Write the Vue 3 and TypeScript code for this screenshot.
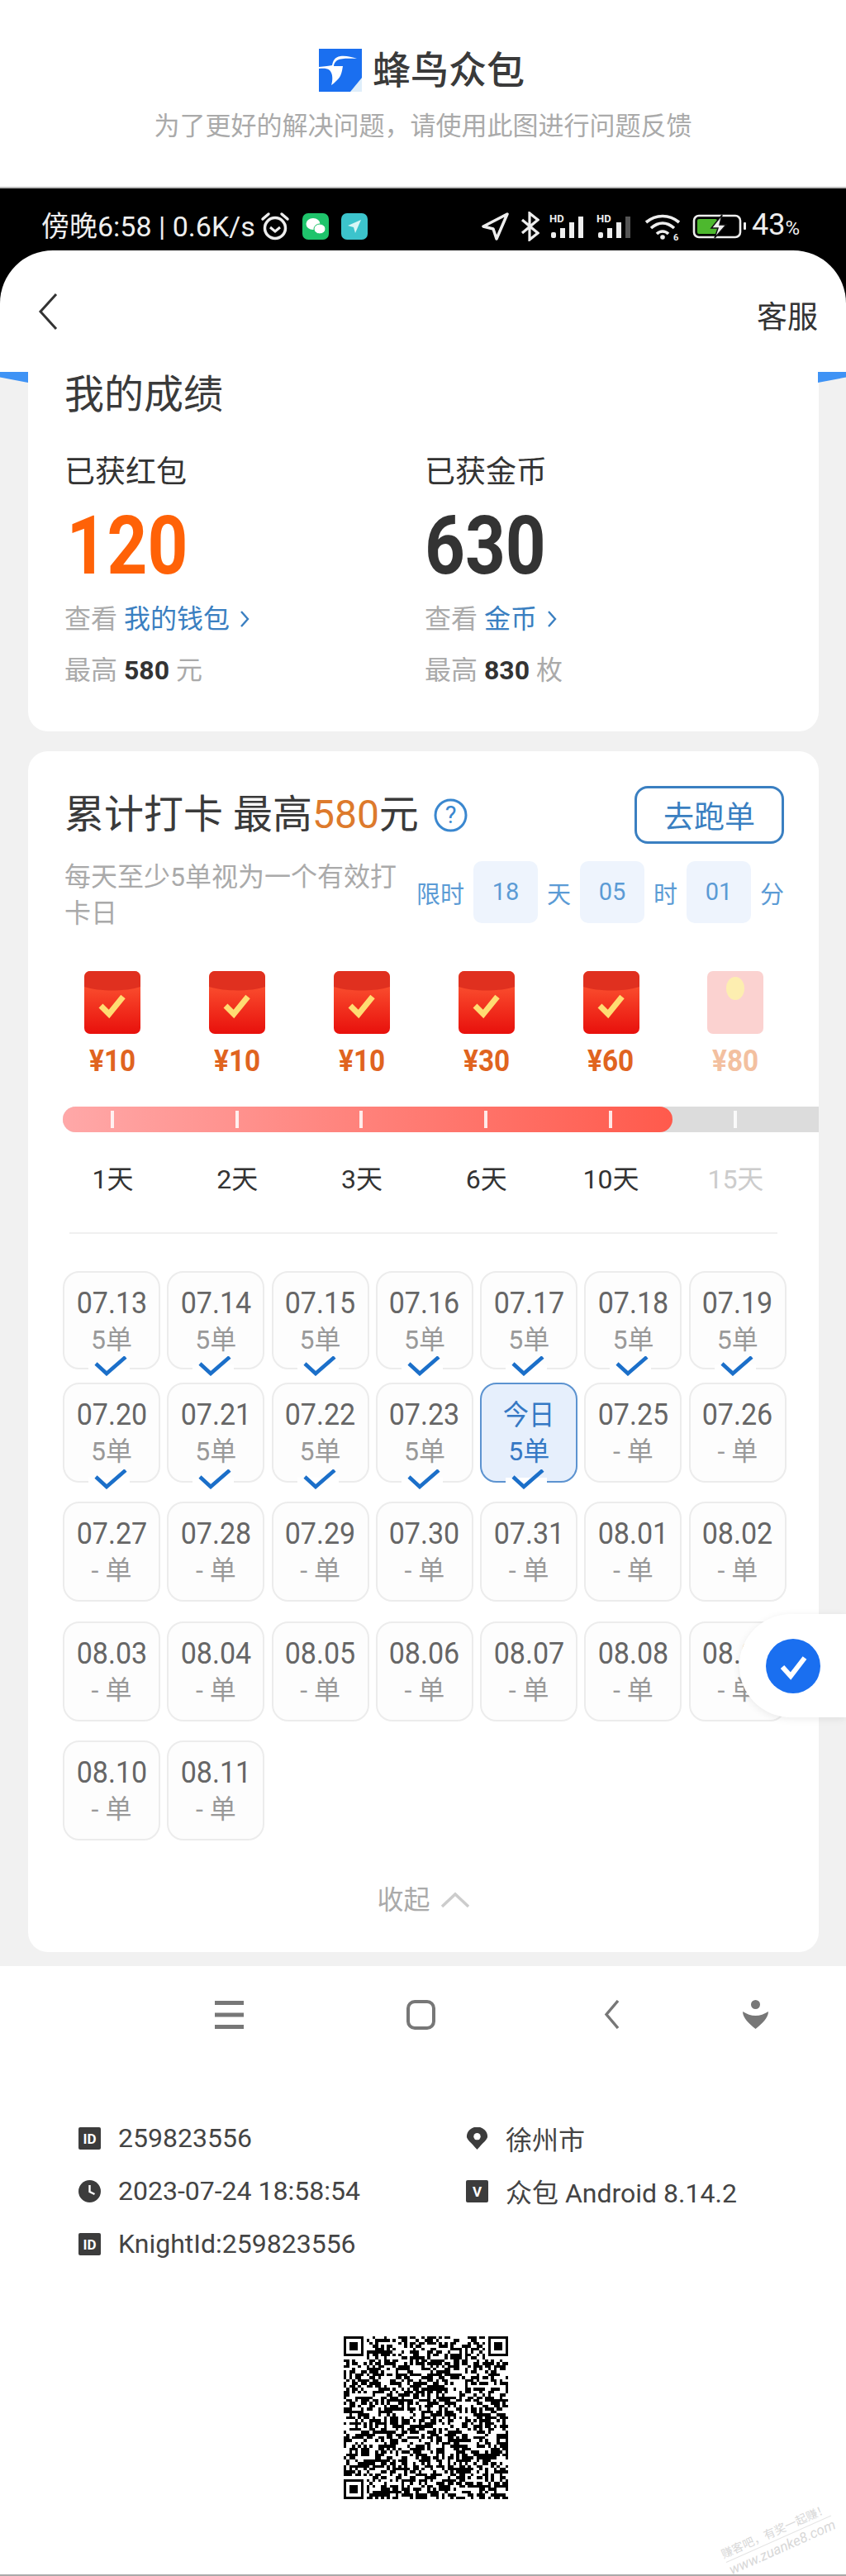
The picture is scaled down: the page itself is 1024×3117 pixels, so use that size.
<!-- App.vue -->
<template>
  <main class="page">
    <header class="top">
      <div class="brand">
        <svg class="logo" viewBox="0 0 52 52" aria-hidden="true">
          <rect width="52" height="52" fill="#1a6ff0" />
          <path d="M38 52 52 35V52Z" fill="#dfeefa" />
          <path
            d="M46 12C38 12 28 11 22 14 19 16 18 19 18 21L29 21C28 27 27 34 22 38 19 41 17 43 15 44 17 38 17 30 13 26 9 23 4 24 0 24L0 22C7 21 13 21 16 20 17 15 19 10 26 9 32 8 40 10 46 12Z"
            fill="#fff"
          />
        </svg>
        <h1>蜂鸟众包</h1>
      </div>
      <p class="hint">为了更好的解决问题，请使用此图进行问题反馈</p>
    </header>

    <section class="phone">
      <div class="status">
        <span class="status-text">傍晚6:58 | 0.6K/s</span>
        <svg class="alarm" viewBox="0 0 36 36" aria-hidden="true">
          <circle cx="18" cy="20" r="12.5" fill="none" stroke="#eee" stroke-width="3.5" />
          <path d="M12 19l6 5 6-5" fill="none" stroke="#eee" stroke-width="3" />
          <path d="M3 9 10 3M33 9 26 3" stroke="#eee" stroke-width="3.5" stroke-linecap="round" />
        </svg>
        <svg class="app-icon wechat" viewBox="0 0 32 32" aria-hidden="true">
          <rect width="32" height="32" rx="7" fill="#1fc46b" />
          <ellipse cx="13" cy="13" rx="8.5" ry="7" fill="#fff" />
          <ellipse cx="21" cy="19" rx="7" ry="6" fill="#fff" stroke="#1fc46b" />
        </svg>
        <svg class="app-icon teal" viewBox="0 0 32 32" aria-hidden="true">
          <rect width="32" height="32" rx="7" fill="#3cc4cc" />
          <path d="M24 8 8 15l7 2 2 7Z" fill="#d8f6f6" />
        </svg>

        <svg class="st-arrow" viewBox="0 0 33 34" aria-hidden="true">
          <path d="M31 2 2 17l12 3 4 12Z" fill="none" stroke="#eee" stroke-width="3.5" stroke-linejoin="round" />
        </svg>
        <svg class="st-bt" viewBox="0 0 23 36" aria-hidden="true">
          <path d="M2 10 21 26 11 34V2L21 10 2 26" fill="none" stroke="#eee" stroke-width="3.2" />
        </svg>
        <svg v-for="(dim, i) in [false, true]" :key="i" class="st-signal" viewBox="0 0 46 30" aria-hidden="true">
          <text x="1" y="10" class="hd">HD</text>
          <rect x="3" y="22" width="6" height="7" rx="2" fill="#eee" />
          <rect x="14" y="17" width="6" height="12" fill="#eee" />
          <rect x="25" y="10" width="6" height="19" fill="#eee" />
          <rect x="36" y="3" width="6" height="26" :fill="dim ? '#555' : '#eee'" />
        </svg>
        <svg class="st-wifi" viewBox="0 0 44 34" aria-hidden="true">
          <path d="M2 12C14 2 30 2 42 12M8 19C17 11 27 11 36 19M15 26C19 22 25 22 29 26" fill="none" stroke="#eee" stroke-width="3.6" />
          <circle cx="22" cy="30" r="2.8" fill="#eee" />
          <text x="35" y="34" class="wifi-six">6</text>
        </svg>
        <svg class="st-battery" viewBox="0 0 66 30" aria-hidden="true">
          <rect x="2" y="2" width="56" height="26" rx="6" fill="none" stroke="#eee" stroke-width="2.6" />
          <rect x="6" y="6" width="24" height="18" rx="2" fill="#4db82e" />
          <path d="M36 1 23 17h8l-4 12 14-16h-8Z" fill="#eee" stroke="#111" stroke-width="1.5" />
          <rect x="62" y="10" width="3" height="9" rx="1" fill="#eee" />
        </svg>
        <span class="battery-text">43<small>%</small></span>
      </div>

      <div class="screen-nav">
        <svg class="back" viewBox="0 0 24 46" aria-hidden="true">
          <path d="M22 2 3 23l19 21" fill="none" stroke="#333" stroke-width="3" />
        </svg>
        <span class="service">客服</span>
      </div>

      <div class="content">
        <section class="card score">
          <h2>我的成绩</h2>
          <div class="stats">
            <div v-for="s in stats" :key="s.label">
              <p class="stat-label">{{ s.label }}</p>
              <p class="stat-num" :class="{ hot: s.hot }">{{ s.value }}</p>
              <p class="stat-link">查看 <a>{{ s.link }}</a><svg class="link-arrow" viewBox="0 0 12 24" aria-hidden="true"><path d="M2 3l8 9-8 9" fill="none" stroke="#3a7fc1" stroke-width="2.4" /></svg></p>
              <p class="stat-max">最高 <b>{{ s.max }}</b> {{ s.unit }}</p>
            </div>
          </div>
        </section>

        <section class="card checkin">
          <div class="head">
            <h2>
              累计打卡 最高<em>580</em>元
              <svg class="help" viewBox="0 0 41 41" aria-hidden="true">
                <circle cx="20.5" cy="20.5" r="18.5" fill="none" stroke="#3a87cf" stroke-width="3" />
                <text x="20.5" y="30" text-anchor="middle" class="help-q">?</text>
              </svg>
            </h2>
            <button class="go">去跑单</button>
          </div>

          <div class="rule">
            <p>每天至少5单视为一个有效打卡日</p>
            <div class="timer">
              <span>限时</span><b>18</b><span>天</span><b>05</b><span>时</span><b>01</b><span>分</span>
            </div>
          </div>

          <div class="rewards">
            <div v-for="r in rewards" :key="r.day" class="reward" :class="{ off: !r.got }">
              <svg class="packet" viewBox="0 0 68 76" aria-hidden="true">
                <template v-if="r.got">
                  <defs>
                    <linearGradient id="pk" x1="0" y1="0" x2="0" y2="1">
                      <stop offset="0%" stop-color="#ff5f38" />
                      <stop offset="100%" stop-color="#e8100c" />
                    </linearGradient>
                  </defs>
                  <rect width="68" height="76" rx="7" fill="url(#pk)" />
                  <path d="M0 7a7 7 0 0 1 7-7h54a7 7 0 0 1 7 7v12c-18 6-50 6-68 0Z" fill="#e0301f" />
                  <path d="M20 42l10 10 17-21" fill="none" stroke="#ffdc72" stroke-width="7" />
                </template>
                <template v-else>
                  <rect width="68" height="76" rx="7" fill="#fbd2d0" />
                  <ellipse cx="34" cy="21" rx="11" ry="14" fill="#fdeeb0" />
                </template>
              </svg>
              <span class="money">¥{{ r.money }}</span>
            </div>
          </div>

          <div class="bar">
            <div class="bar-fill"></div>
            <i v-for="left in ticks" :key="left" class="tick" :style="{ left: left + 'px' }"></i>
          </div>

          <div class="rewards days">
            <span v-for="r in rewards" :key="r.day" :class="{ off: !r.got }">{{ r.day }}天</span>
          </div>

          <div class="divider"></div>

          <div class="calendar">
            <div v-for="d in days" :key="d.date" class="cell" :class="{ done: d.done, today: d.today }">
              <span class="date">{{ d.today ? '今日' : d.date }}</span>
              <span class="orders">{{ d.done ? '5单' : '- 单' }}</span>
              <svg v-if="d.done" class="tick-mark" viewBox="0 0 50 24" aria-hidden="true">
                <rect y="10" width="50" height="6" fill="#fff" />
                <path d="M9 9l13 12L45 1" fill="none" stroke="#1b6fc9" stroke-width="4.6" />
              </svg>
            </div>
          </div>

          <div class="fold">
            收起
            <svg viewBox="0 0 36 20" aria-hidden="true">
              <path d="M2 18 18 3l16 15" fill="none" stroke="#ccc" stroke-width="3.5" />
            </svg>
          </div>
        </section>
      </div>
    </section>

    <nav class="dock">
      <svg class="d-menu" viewBox="0 0 35 35" aria-hidden="true">
        <path d="M0 3h35M0 17.500h35M0 32h35" stroke="#777" stroke-width="5" />
      </svg>
      <svg class="d-home" viewBox="0 0 35 36" aria-hidden="true">
        <rect x="2" y="2" width="31" height="32" rx="8" fill="none" stroke="#777" stroke-width="4" />
      </svg>
      <svg class="d-back" viewBox="0 0 19 35" aria-hidden="true">
        <path d="M17 1 3 17.500 17 34" fill="none" stroke="#777" stroke-width="3.4" />
      </svg>
      <svg class="d-person" viewBox="0 0 31 35" aria-hidden="true">
        <circle cx="15.500" cy="5.500" r="5.500" fill="#777" />
        <path d="M0 14c5 3 10 5 15.500 5S26 17 31 14c0 8-8 15-15.500 21C8 29 0 22 0 14Z" fill="#777" />
      </svg>
    </nav>

    <section class="info">
      <div class="info-row">
        <svg viewBox="0 0 27 27" aria-hidden="true">
          <rect width="27" height="27" rx="2" fill="#3c3c3c" />
          <text x="13.500" y="19.500" text-anchor="middle" class="ico-text">ID</text>
        </svg>
        <span>259823556</span>
      </div>
      <div class="info-row">
        <svg viewBox="0 0 27 29" aria-hidden="true">
          <path d="M13.500 29C6 20 0 16 0 12a13.500 12.500 0 0 1 27 0c0 4-6 8-13.500 17Z" fill="#3c3c3c" />
          <circle cx="13.500" cy="12" r="4.500" fill="#fff" />
        </svg>
        <span>徐州市</span>
      </div>
      <div class="info-row">
        <svg viewBox="0 0 27 27" aria-hidden="true">
          <circle cx="13.500" cy="13.500" r="13.500" fill="#3c3c3c" />
          <path d="M13.500 6v8l6 3" fill="none" stroke="#fff" stroke-width="2.400" />
        </svg>
        <span>2023-07-24 18:58:54</span>
      </div>
      <div class="info-row">
        <svg viewBox="0 0 27 27" aria-hidden="true">
          <rect width="27" height="27" rx="2" fill="#3c3c3c" />
          <text x="13.500" y="19.500" text-anchor="middle" class="ico-text">V</text>
        </svg>
        <span>众包 Android 8.14.2</span>
      </div>
      <div class="info-row">
        <svg viewBox="0 0 27 27" aria-hidden="true">
          <rect width="27" height="27" rx="2" fill="#3c3c3c" />
          <text x="13.500" y="19.500" text-anchor="middle" class="ico-text">ID</text>
        </svg>
        <span>KnightId:259823556</span>
      </div>
    </section>

    <svg class="qr" :viewBox="`0 0 ${qrSize} ${qrSize}`" preserveAspectRatio="none" shape-rendering="crispEdges" aria-hidden="true">
      <path :d="qrPath" fill="#000" />
    </svg>

    <!-- overlays -->
    <div class="float-pill">
      <svg viewBox="0 0 66 66" aria-hidden="true">
        <circle cx="33" cy="33" r="33" fill="#1a6ff0" />
        <path d="M20 34l10 11 17-22" fill="none" stroke="#fff" stroke-width="6" />
      </svg>
    </div>
    <div class="watermark">
      <span>赚客吧，有奖一起赚！</span>
      <span class="wm-url">www.zuanke8.com</span>
    </div>
  </main>
</template>

<script setup lang="ts">
import { computed } from 'vue'

interface Day {
  date: string
  done: boolean
  today: boolean
}

const stats = [
  { label: '已获红包', value: '120', hot: true, link: '我的钱包', max: '580', unit: '元' },
  { label: '已获金币', value: '630', hot: false, link: '金币', max: '830', unit: '枚' }
]

const rewards = [
  { day: 1, money: 10, got: true },
  { day: 2, money: 10, got: true },
  { day: 3, money: 10, got: true },
  { day: 6, money: 30, got: true },
  { day: 10, money: 60, got: true },
  { day: 15, money: 80, got: false }
]

const ticks = [58, 209, 359, 510, 661, 812]

const pad = (n: number): string => String(n).padStart(2, '0')

const days = computed<Day[]>(() => {
  const list: Day[] = []
  for (let d = 13; d <= 31; d++) {
    list.push({ date: `07.${pad(d)}`, done: d <= 24, today: d === 24 })
  }
  for (let d = 1; d <= 11; d++) {
    list.push({ date: `08.${pad(d)}`, done: false, today: false })
  }
  return list
})

// qr code look-alike, modules from a small seeded generator
const qrSize = 57

const qrPath = computed<string>(() => {
  let seed = 259823556
  const next = (): number => {
    seed = (seed * 1103515245 + 12345) % 2147483648
    return seed / 2147483648
  }
  const finder = (x: number, y: number, ox: number, oy: number): boolean => {
    const dx = x - ox
    const dy = y - oy
    if (dx < 0 || dy < 0 || dx > 6 || dy > 6) return false
    const ring = dx === 0 || dy === 0 || dx === 6 || dy === 6
    const core = dx >= 2 && dx <= 4 && dy >= 2 && dy <= 4
    return ring || core
  }
  const near = (x: number, y: number): boolean =>
    (x < 8 && y < 8) || (x >= qrSize - 8 && y < 8) || (x < 8 && y >= qrSize - 8)

  let d = ''
  for (let y = 0; y < qrSize; y++) {
    for (let x = 0; x < qrSize; x++) {
      const r = next()
      const on = near(x, y)
        ? finder(x, y, 0, 0) || finder(x, y, qrSize - 7, 0) || finder(x, y, 0, qrSize - 7)
        : r > 0.48
      if (on) d += `M${x} ${y}h1v1h-1z`
    }
  }
  return d
})
</script>

<style>
html,
body {
  margin: 0;
  background: #fff;
}
</style>

<style scoped>
* {
  box-sizing: border-box;
}

.page {
  position: relative;
  width: 1024px;
  height: 3117px;
  overflow: hidden;
  background: #fff;
  border-bottom: 2px solid #aaa;
  font-family: Roboto, "Noto Sans CJK SC", sans-serif;
  color: #333;
}

h1,
h2,
p {
  margin: 0;
  font-weight: 400;
}

/* top banner */
.top {
  height: 226px;
  padding-top: 59px;
  text-align: center;
}
.brand {
  display: flex;
  align-items: center;
  gap: 13px;
  padding-left: 386px;
}
.logo {
  width: 52px;
  height: 52px;
}
.brand h1 {
  font-size: 46px;
  line-height: 52px;
  font-weight: 500;
  color: #3a3a3a;
}
.hint {
  margin-top: 22px;
  font-size: 31px;
  line-height: 40px;
  color: #aaa;
}

/* status bar */
.phone {
  background: #000;
  border-top: 2px solid #bbb;
}
.status {
  display: flex;
  align-items: center;
  height: 75px;
  padding: 17px 56px 0 50px;
  color: #eee;
}
.status-text {
  font-size: 34px;
  line-height: 40px;
  white-space: nowrap;
}
.alarm {
  width: 36px;
  height: 36px;
  margin-left: 6px;
}
.app-icon {
  width: 32px;
  height: 32px;
}
.wechat {
  margin-left: 15px;
}
.teal {
  margin-left: 15px;
}
.st-arrow {
  width: 33px;
  height: 34px;
  margin-left: auto;
}
.st-bt {
  width: 23px;
  height: 36px;
  margin-left: 14px;
}
.st-signal {
  width: 46px;
  height: 30px;
  margin-left: 11px;
}
.hd {
  font: 700 13px Roboto, sans-serif;
  fill: #eee;
}
.st-wifi {
  width: 44px;
  height: 34px;
  margin-left: 13px;
}
.wifi-six {
  font: 700 11px Roboto, sans-serif;
  fill: #eee;
}
.st-battery {
  width: 66px;
  height: 30px;
  margin-left: 14px;
}
.battery-text {
  margin-left: 6px;
  font-size: 36px;
  line-height: 40px;
}
.battery-text small {
  font-size: 24px;
}

/* app header */
.screen-nav {
  display: flex;
  align-items: center;
  justify-content: space-between;
  height: 147px;
  padding: 0 34px 0 46px;
  background: #fff;
  border-radius: 64px 64px 0 0;
}
.back {
  width: 24px;
  height: 46px;
}
.service {
  font-size: 37px;
  padding-top: 8px;
}

.content {
  position: relative;
  padding: 0 33px 17px 34px;
  background: #f1f1f1;
}
.content::before,
.content::after {
  content: '';
  position: absolute;
  top: 0;
  width: 34px;
  height: 13px;
  background: #3f93f5;
}
.content::before {
  left: 0;
  clip-path: polygon(0 0, 100% 0, 100% 100%, 0 50%);
}
.content::after {
  right: 0;
  clip-path: polygon(0 0, 100% 0, 100% 50%, 0 100%);
}

.card {
  background: #fff;
  border-radius: 24px;
}

/* score card */
.score {
  border-radius: 0 0 24px 24px;
  padding: 0 44px 52px;
}
.score h2 {
  font-size: 48px;
  line-height: 56px;
  color: #3a3a3a;
}
.stats {
  display: grid;
  grid-template-columns: 436px 1fr;
  margin-top: 44px;
}
.stat-label {
  font-size: 37px;
  line-height: 44px;
}
.stat-num {
  margin-top: 17px;
  font-size: 98px;
  line-height: 100px;
  font-weight: 700;
  color: #333;
  transform: scaleX(0.87);
  transform-origin: left center;
}
.stat-num.hot {
  color: #ff6207;
  padding-left: 3px;
}
.stat-link {
  display: flex;
  align-items: center;
  margin-top: 16px;
  font-size: 32px;
  line-height: 44px;
  color: #aaa;
  white-space: pre;
}
.stat-link a {
  color: #3a7fc1;
}
.link-arrow {
  width: 12px;
  height: 24px;
  margin-left: 12px;
}
.stat-max {
  margin-top: 18px;
  font-size: 32px;
  line-height: 44px;
  color: #aaa;
}
.stat-max b {
  font-weight: 700;
  color: #333;
}

/* check-in card */
.checkin {
  margin-top: 24px;
  padding: 42px 0 41px;
}
.head {
  display: flex;
  align-items: center;
  justify-content: space-between;
  padding: 0 42px 0 44px;
}
.head h2 {
  display: flex;
  align-items: center;
  font-size: 48px;
  line-height: 56px;
  color: #3a3a3a;
  white-space: nowrap;
}
.head em {
  font-style: normal;
  color: #dd7a2c;
}
.help {
  width: 41px;
  height: 41px;
  margin-left: 18px;
}
.help-q {
  font: 400 29px Roboto, sans-serif;
  fill: #3a87cf;
}
.go {
  width: 181px;
  height: 70px;
  background: #fff;
  border: 3px solid #3a7fc1;
  border-radius: 16px;
  font: 400 37px Roboto, "Noto Sans CJK SC", sans-serif;
  color: #3a7fc1;
}
.rule {
  display: flex;
  margin-top: 18px;
  padding-left: 44px;
}
.rule p {
  width: 426px;
  padding-right: 14px;
  font-size: 32px;
  line-height: 44px;
  color: #aaa;
}
.timer {
  display: flex;
  align-items: center;
  gap: 11px;
  height: 75px;
  margin-top: 3px;
  font-size: 29px;
  color: #5b9bd5;
}
.timer b {
  width: 78px;
  height: 75px;
  font-weight: 400;
  line-height: 75px;
  text-align: center;
  background: #eef4fd;
  border-radius: 10px;
}

.rewards {
  display: grid;
  grid-template-columns: repeat(6, 150.800px);
  margin-top: 48px;
  padding-left: 27px;
  text-align: center;
}
.reward {
  display: flex;
  flex-direction: column;
  align-items: center;
}
.packet {
  width: 68px;
  height: 76px;
}
.money {
  margin-top: 13px;
  font-size: 37px;
  line-height: 40px;
  font-weight: 700;
  color: #e0641f;
  transform: scaleX(0.9);
}
.reward.off .money {
  color: #f3c0a0;
}

.bar {
  position: relative;
  height: 31px;
  margin: 35px 0 0 42px;
  background: #dcdcdc;
  border-radius: 16px 0 0 16px;
}
.bar-fill {
  width: 738px;
  height: 100%;
  border-radius: 16px;
  background: linear-gradient(90deg, #ffa8a8, #ff5a4c);
}
.tick {
  position: absolute;
  top: 5px;
  width: 4px;
  height: 21px;
  background: #fff;
  opacity: 0.85;
}

.days {
  margin-top: 35px;
  font-size: 32px;
  line-height: 44px;
  color: #333;
}
.days .off {
  color: #ccc;
}
.divider {
  height: 2px;
  margin: 42px 50px 0;
  background: #f0f0f0;
}

/* calendar grid */
.calendar {
  display: grid;
  grid-template-columns: repeat(7, 118px);
  column-gap: 8.300px;
  row-gap: 23.500px;
  margin: 45px 0 0 42px;
}
.cell {
  position: relative;
  display: flex;
  flex-direction: column;
  align-items: center;
  gap: 4px;
  height: 121px;
  padding-top: 17px;
  background: #fdfdfd;
  border: 2px solid #ececec;
  border-radius: 20px;
}
.cell:nth-child(-n + 7) {
  height: 119px;
  margin-bottom: -8px;
}
.date {
  font-size: 37px;
  line-height: 40px;
  color: #666;
  white-space: nowrap;
  transform: scaleX(0.92);
}
.orders {
  font-size: 32px;
  line-height: 40px;
  color: #999;
}
.today {
  background: #e6effc;
  border: 2.500px solid #5c93d0;
}
.today .date {
  font-size: 34px;
}
.today .date,
.today .orders {
  color: #3578c4;
}
.tick-mark {
  position: absolute;
  left: 29px;
  bottom: -10px;
  width: 50px;
  height: 24px;
}

.fold {
  display: flex;
  align-items: center;
  justify-content: center;
  gap: 12px;
  margin-top: 50px;
  font-size: 32px;
  line-height: 44px;
  color: #aaa;
}
.fold svg {
  width: 36px;
  height: 20px;
}

/* android nav */
.dock {
  display: grid;
  grid-template-columns: 232px 239px 168px 1fr;
  height: 100px;
  padding: 41px 0 0 260px;
}
.d-menu,
.d-home {
  width: 35px;
  height: 36px;
}
.d-back {
  width: 19px;
  height: 35px;
}
.d-person {
  width: 31px;
  height: 35px;
}

/* info block */
.info {
  display: grid;
  grid-template-columns: 469px 1fr;
  grid-auto-rows: 64px;
  margin-top: 76px;
  padding-left: 95px;
}
.info-row {
  display: flex;
  align-items: center;
  gap: 21px;
  font-size: 32px;
  color: #444;
}
.info-row svg {
  width: 27px;
  height: 27px;
}
.ico-text {
  font: 700 17px Roboto, sans-serif;
  fill: #fff;
}

.qr {
  display: block;
  width: 199px;
  height: 197px;
  margin: 80px 0 0 416px;
}

/* floating button, sits over the grid */
.float-pill {
  position: absolute;
  top: 1953px;
  right: 0;
  display: flex;
  align-items: center;
  width: 129px;
  height: 125px;
  padding-left: 32px;
  background: #fff;
  border-radius: 62px 0 0 62px;
  box-shadow: 0 2px 10px rgba(0, 0, 0, 0.08);
}
.float-pill svg {
  width: 66px;
  height: 66px;
}

.watermark {
  position: absolute;
  right: 12px;
  bottom: 22px;
  display: flex;
  flex-direction: column;
  align-items: flex-end;
  font-size: 14px;
  line-height: 20px;
  color: #d8d8d8;
  transform: rotate(-24deg);
}
.wm-url {
  font-size: 17px;
  font-style: italic;
  border-top: 1px solid #e4e4e4;
}
</style>
